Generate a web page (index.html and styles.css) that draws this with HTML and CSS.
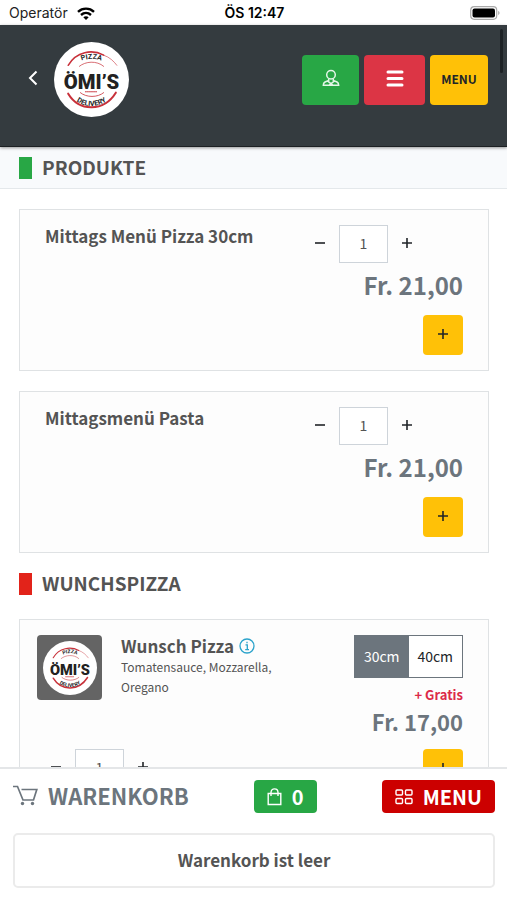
FILE: index.html
```html
<!DOCTYPE html>
<html lang="de">
<head>
<meta charset="utf-8">
<meta name="viewport" content="width=device-width, initial-scale=1">
<title>Ömi's Pizza Delivery</title>
<link rel="stylesheet" href="styles.css">
</head>
<body>
<svg class="defs" aria-hidden="true">
  <defs>
    <path id="arc-top" d="M15 28A27 27 0 0 1 59 28"/>
    <path id="arc-bottom" d="M15 51A26 26 0 0 0 59 51"/>
    <symbol id="logo" viewBox="0 0 74 74">
      <circle cx="37" cy="37" r="37" fill="#fff"/>
      <g fill="none" stroke="#c8313a" stroke-linecap="round">
        <path d="M14 23C22 9 38 7 49 13" stroke-width="1.5"/>
        <path d="M49 13C55 15 59 19 62 23" stroke-width=".6"/>
        <path d="M25 24C31 19 42 18 49 24" stroke-width=".7"/>
        <path d="M14 51C25 69 49 69 61 50" stroke-width="2"/>
        <path d="M26 50C32 55 43 55 49 50" stroke-width=".8"/>
        <path d="M31 49H43" stroke-width="1" stroke-dasharray="1 1"/>
      </g>
      <g class="logo-text">
        <text class="logo-name" x="37" y="46" text-anchor="middle">ÖMI’S</text>
        <text class="logo-small"><textPath href="#arc-top" startOffset="50%" text-anchor="middle">PIZZA</textPath></text>
        <text class="logo-small"><textPath href="#arc-bottom" startOffset="50%" text-anchor="middle">DELIVERY</textPath></text>
      </g>
    </symbol>
  </defs>
</svg>

<div class="app">
  <div class="status">
    <span class="carrier">Operatör
      <svg width="18" height="13" viewBox="0 0 18 13" fill="none" stroke="#000" stroke-width="2.4"><path d="M1 4.8C5.500 .6 12.500 .6 17 4.800M4 8C7 5.300 11 5.300 14 8"/><path d="M9 13L6.300 10.300C7.800 8.900 10.200 8.900 11.700 10.300Z" fill="#000" stroke="none"/></svg>
    </span>
    <span class="time">ÖS 12:47</span>
    <svg class="battery" width="30" height="14" viewBox="0 0 30 14"><rect x=".7" y=".7" width="26" height="12.600" rx="3.500" fill="#fff" stroke="#aaa" stroke-width="1.200"/><rect x="2.500" y="2.500" width="22.500" height="9" rx="2" fill="#000"/><path d="M28.200 4.800Q31 7 28.200 9.200Z" fill="#aaa"/></svg>
  </div>

  <header class="header">
    <a class="back" href="#" aria-label="Zurück"><svg width="10" height="16" viewBox="0 0 10 16" fill="none" stroke="#fff" stroke-width="2"><path d="M8.500 1.500L2 8L8.500 14.500"/></svg></a>
    <svg class="logo" role="img" aria-label="Ömi's Pizza Delivery"><use href="#logo"/></svg>
    <nav class="actions">
      <button class="btn green account" aria-label="Konto"><svg width="18" height="18" viewBox="0 0 18 18" fill="none" stroke="#e3f6e7" stroke-width="1.500"><circle cx="9" cy="5.800" r="4.300"/><path d="M6.700 9.700V11.500L3 13Q1.300 14 1.300 16.300H16.700Q16.700 14 15 13L11.300 11.500V9.700M6 12.300L9 14.500L12 12.300M9 14.500L7 16.300M9 14.500L11 16.300"/></svg></button>
      <button class="btn red list" aria-label="Navigation"><svg width="18" height="17" viewBox="0 0 18 17" stroke="#fff" stroke-width="3" stroke-linecap="round"><path d="M2 2H16M2 8.500H16M2 15H16"/></svg></button>
      <button class="btn yellow menu">MENU</button>
    </nav>
    <span class="scrollbar"></span>
  </header>

  <main class="content">
    <h2 class="section tinted"><span class="mark mark-green"></span><span class="label">PRODUKTE</span></h2>
    <div class="cards">
      <article class="card">
        <h3 class="name">Mittags Menü Pizza 30cm</h3>
        <div class="buy">
          <div class="qty"><button aria-label="Weniger"><svg width="12" height="12" viewBox="0 0 12 12"><path d="M1 6H11"/></svg></button><input value="1" aria-label="Anzahl"><button aria-label="Mehr"><svg width="12" height="12" viewBox="0 0 12 12"><path d="M1 6H11M6 1V11"/></svg></button></div>
          <div class="price">Fr. 21,00</div>
          <button class="btn yellow add" aria-label="Hinzufügen"><svg width="12" height="12" viewBox="0 0 12 12"><path d="M1 6H11M6 1V11"/></svg></button>
        </div>
      </article>
      <article class="card">
        <h3 class="name">Mittagsmenü Pasta</h3>
        <div class="buy">
          <div class="qty"><button aria-label="Weniger"><svg width="12" height="12" viewBox="0 0 12 12"><path d="M1 6H11"/></svg></button><input value="1" aria-label="Anzahl"><button aria-label="Mehr"><svg width="12" height="12" viewBox="0 0 12 12"><path d="M1 6H11M6 1V11"/></svg></button></div>
          <div class="price">Fr. 21,00</div>
          <button class="btn yellow add" aria-label="Hinzufügen"><svg width="12" height="12" viewBox="0 0 12 12"><path d="M1 6H11M6 1V11"/></svg></button>
        </div>
      </article>
    </div>
    <h2 class="section"><span class="mark mark-red"></span><span class="label">WUNCHSPIZZA</span></h2>
    <div class="cards">
      <article class="card pizza">
        <div class="thumb"><svg role="img" aria-label="Wunsch Pizza"><use href="#logo"/></svg></div>
        <div class="info">
          <h3 class="name">Wunsch Pizza <svg width="16" height="16" viewBox="0 0 16 16" fill="none" stroke="#2ba3cb" stroke-width="1.300"><circle cx="8" cy="8" r="7"/><path d="M6.500 6.800H8.300V11.500M6.200 11.700H10M8 3.800V5.200"/></svg></h3>
          <p class="toppings">Tomatensauce, Mozzarella, Oregano</p>
        </div>
        <div class="buy">
          <div class="sizes"><button class="size chosen">30cm</button><button class="size">40cm</button></div>
          <div class="extra">+ Gratis</div>
          <div class="price">Fr. 17,00</div>
        </div>
        <div class="order">
          <div class="qty"><button aria-label="Weniger"><svg width="12" height="12" viewBox="0 0 12 12"><path d="M1 6H11"/></svg></button><input value="1" aria-label="Anzahl"><button aria-label="Mehr"><svg width="12" height="12" viewBox="0 0 12 12"><path d="M1 6H11M6 1V11"/></svg></button></div>
          <button class="btn yellow add" aria-label="Hinzufügen"><svg width="12" height="12" viewBox="0 0 12 12"><path d="M1 6H11M6 1V11"/></svg></button>
        </div>
      </article>
    </div>
  </main>

  <footer class="cart">
    <div class="cart-bar">
      <h2 class="cart-title"><svg width="25" height="21" viewBox="0 0 25 21" fill="none" stroke="#6c757d" stroke-width="1.700"><path d="M0 1.500H4.500L10 15H20.500L23.800 4.500H8.500"/><circle cx="9.500" cy="18.500" r="1.700" fill="#6c757d" stroke="none"/><circle cx="19.500" cy="18.500" r="1.700" fill="#6c757d" stroke="none"/></svg>WARENKORB</h2>
      <button class="btn green pill"><svg width="15" height="18" viewBox="0 0 15 18" fill="none" stroke="#fff" stroke-width="1.400"><path d="M1.200 5.500H13.800V16.500H1.200ZM4 8V4.500C4 -.3 11 -.3 11 4.500V8"/></svg>0</button>
      <button class="btn crimson pill"><svg width="18" height="16" viewBox="0 0 18 16" fill="none" stroke="#fff" stroke-width="1.400"><rect x="1" y="1" width="6.500" height="5" rx="1"/><rect x="10.500" y="1" width="6.500" height="5" rx="1"/><rect x="1" y="9.500" width="6.500" height="5" rx="1"/><rect x="10.500" y="9.500" width="6.500" height="5" rx="1"/></svg>MENU</button>
    </div>
    <p class="empty">Warenkorb ist leer</p>
  </footer>
</div>
</body>
</html>
```
FILE: styles.css
```css
* { box-sizing: border-box; }
body {
  margin: 0;
  background: #fff;
  color: #545454;
  font-family: "Noto Sans CJK SC", "Noto Sans", sans-serif;
}
h2, h3, p { margin: 0; }
svg { flex: none; }
button, input { font: inherit; color: inherit; }
button { padding: 0 0 2px; border: 0; background: none; }

.defs { position: absolute; width: 0; height: 0; }
.logo-text { font-family: Roboto, sans-serif; fill: #222; }
.logo-name { font-size: 20px; font-weight: 900; }
.logo-small { font-size: 7px; font-weight: 700; }

.app {
  display: flex;
  flex-direction: column;
  height: 100vh;
}

.status {
  display: grid;
  grid-template-columns: 1fr auto 1fr;
  align-items: center;
  height: 25px;
  padding: 1px 7px 0 9px;
  color: #222;
  font: 14px/20px Inter, sans-serif;
}
.carrier { display: flex; align-items: center; gap: 9px; }
.time { font-weight: 600; color: #000; }
.battery { justify-self: end; }

.header {
  position: relative;
  z-index: 1;
  display: flex;
  align-items: center;
  padding: 17px 19px 29px 28px;
  background: #343b3f;
  border-bottom: 1px solid #1c2023;
  box-shadow: 0 1px 3px rgba(0, 0, 0, .4);
}
.back { display: flex; margin-right: 16px; padding-bottom: 3px; }
.logo { width: 75px; height: 75px; }
.actions { display: flex; gap: 5px; margin-left: auto; }
.scrollbar {
  position: absolute;
  top: 4px;
  right: 4px;
  width: 3px;
  height: 44px;
  border-radius: 2px;
  background: #1d2225;
}

.btn {
  display: flex;
  align-items: center;
  justify-content: center;
  border-radius: 4px;
  color: #fff;
  font-weight: 700;
}
.green { background: #28a745; }
.red { background: #dc3545; }
.yellow { background: #ffc107; color: #212529; }
.crimson { background: #cc0000; }
.actions .btn { width: 57px; height: 50px; padding-bottom: 3px; font-size: 12px; }
.actions .list { width: 61px; }
.actions .menu { width: 58px; }

.content { flex: 1; min-height: 0; overflow: hidden; }
.section {
  display: flex;
  align-items: center;
  gap: 10px;
  height: 42px;
  padding: 0 19px;
  font-size: 19px;
  line-height: 22px;
}
.label { padding-bottom: 2px; }
.tinted {
  margin-bottom: 20px;
  border-bottom: 1px solid #e4e8eb;
  background: #f8fafc;
}
.mark { width: 13px; height: 22px; }
.mark-green { background: #28a745; }
.mark-red { background: #e2231a; }

.cards { display: grid; gap: 20px; padding: 0 18px 10px 19px; }
.cards + .section { margin-bottom: 14px; }
.card {
  display: grid;
  grid-template-columns: 1fr 162px;
  padding: 15px 25px;
  border: 1px solid #dfe2e4;
  background: #fdfdfd;
}
.name { font-size: 17px; line-height: 22px; }
.buy { display: flex; flex-direction: column; align-items: flex-end; }
.qty { display: flex; align-self: flex-start; height: 38px; }
.qty button { display: grid; place-items: center; width: 38px; }
.qty svg, .add svg { stroke: #212529; stroke-width: 1.6; }
.qty input {
  width: 49px;
  padding: 0 0 2px;
  border: 1px solid #ced4da;
  border-radius: 0;
  background: #fff;
  font-size: 14px;
  text-align: center;
}
.price {
  margin-bottom: 8px;
  color: #6c757d;
  font-size: 24px;
  font-weight: 700;
  line-height: 44px;
}
.add { width: 40px; height: 40px; }

.pizza { grid-template-columns: 65px 1fr 109px; column-gap: 19px; padding-left: 17px; }
.thumb {
  display: grid;
  place-items: center;
  width: 65px;
  height: 65px;
  border-radius: 4px;
  background: #646464;
}
.thumb svg { width: 54px; height: 54px; }
.info { padding-right: 40px; }
.info .name { display: flex; align-items: center; gap: 5px; }
.toppings { font-size: 12px; line-height: 20px; }
.sizes { display: flex; width: 109px; height: 43px; border: 1px solid #6c757d; }
.size { flex: 1; color: #212529; font-size: 14px; background: #fff; }
.chosen { background: #6c757d; color: #fff; }
.extra { margin-top: 7px; color: #dc2a48; font-size: 13px; font-weight: 700; line-height: 20px; }
.pizza .price { margin-bottom: 12px; font-size: 22px; line-height: 32px; }
.order { grid-column: 1 / -1; display: flex; justify-content: space-between; }

.cart {
  position: relative;
  padding: 11px 12px 12px 13px;
  border-top: 2px solid #e4e6e8;
  background: #fff;
}
.cart-bar { display: flex; align-items: center; justify-content: space-between; }
.cart-title {
  display: flex;
  align-items: center;
  gap: 10px;
  padding-bottom: 2px;
  color: #6c757d;
  font-size: 22px;
  line-height: 31px;
}
.pill { gap: 10px; height: 33px; padding: 0 13px; font-size: 20px; line-height: 33px; }
.empty {
  margin-top: 20px;
  padding-bottom: 2px;
  border: 2px solid #ebebeb;
  border-radius: 5px;
  font-size: 17px;
  font-weight: 700;
  line-height: 49px;
  text-align: center;
}
```
